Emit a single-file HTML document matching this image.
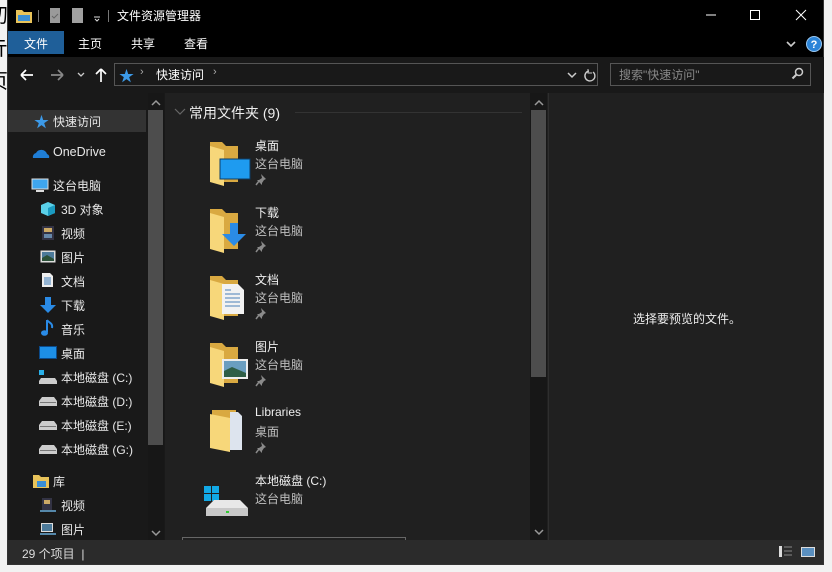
<!DOCTYPE html>
<html><head><meta charset="utf-8"><style>
*{margin:0;padding:0;box-sizing:border-box}
body{width:832px;height:572px;background:#f2f2f2;position:relative;overflow:hidden;font-family:"Liberation Sans","Noto Sans CJK SC",sans-serif;font-size:12px;color:#fff}
.a{position:absolute}
.win{left:7px;top:0;width:817px;height:565px;background:#000;border:1px solid #333;border-top:none}
.t{position:absolute;white-space:nowrap}
.nav .t{font-size:12px;color:#e8e8e8}
.it .n{font-size:12px;color:#eee}
.it .s{font-size:12px;color:#bdbdbd}
</style></head><body>
<div class="a" style="left:0;top:0;width:8px;height:110px;font-size:20px;color:#000;line-height:33px;overflow:hidden"><div style="margin-left:-12px">初<br>亓<br>页</div></div>
<div class="a win"></div>
<svg width="0" height="0" style="position:absolute"><defs><g id="pin"><path d="M6 1l5 5-2 1-2 3 0 2-5-5 2 0 3-2z" fill="#8a8a8a"/><path d="M4 8l-3 4" stroke="#8a8a8a" stroke-width="1.5"/></g></defs></svg>
<!-- title bar -->
<svg class="a" style="left:15px;top:7px" width="105" height="18">
<path d="M1 3h6l2 2h8v11H1z" fill="#e8c35a"/><rect x="3" y="8" width="12" height="6" fill="#3a8fd6"/>
<rect x="23" y="3" width="1" height="12" fill="#777"/>
<rect x="35" y="1" width="10" height="15" fill="#9a9a9a"/><path d="M37 9l2 2 4-4" stroke="#666" fill="none"/>
<rect x="57" y="1" width="11" height="15" fill="#a0a0a0"/>
<path d="M79 10h6M80 12l2 2 2-2" stroke="#ddd" fill="none"/>
<rect x="93" y="3" width="1" height="12" fill="#777"/>
</svg>
<div class="t" style="left:117px;top:7px;font-size:12px;color:#fff">文件资源管理器</div>
<svg class="a" style="left:700px;top:6px" width="120" height="20">
<path d="M6 9h10" stroke="#fff"/><rect x="50.5" y="4.5" width="9" height="9" stroke="#fff" fill="none"/>
<path d="M96 4l10 10M106 4l-10 10" stroke="#fff"/></svg>
<!-- ribbon -->
<div class="a" style="left:8px;top:31px;width:56px;height:23px;background:#1f5f99"></div>
<div class="t" style="left:24px;top:35px;font-size:12px">文件</div>
<div class="t" style="left:78px;top:35px;font-size:12px">主页</div>
<div class="t" style="left:131px;top:35px;font-size:12px">共享</div>
<div class="t" style="left:184px;top:35px;font-size:12px">查看</div>
<svg class="a" style="left:784px;top:36px" width="40" height="16"><path d="M3 6l4 4 4-4" stroke="#ccc" stroke-width="1.6" fill="none"/><circle cx="30" cy="8" r="7.5" fill="#2b84d8" stroke="#9cc8f0"/><text x="30" y="12" font-size="11" font-weight="bold" fill="#fff" text-anchor="middle" font-family="Liberation Sans">?</text></svg>
<!-- address row -->
<div class="a" style="left:8px;top:57px;width:816px;height:36px;background:#191919"></div>
<svg class="a" style="left:18px;top:66px" width="95" height="18">
<path d="M3 9h12M3 9l5-5M3 9l5 5" stroke="#fff" stroke-width="1.7" fill="none"/>
<path d="M33 9h12M45 9l-5-5M45 9l-5 5" stroke="#888" stroke-width="1.7" fill="none"/>
<path d="M60 7l3 3 3-3" stroke="#ccc" stroke-width="1.3" fill="none"/>
<path d="M83 16V3M83 3l-5 5M83 3l5 5" stroke="#fff" stroke-width="1.7" fill="none"/></svg>
<div class="a" style="left:114px;top:63px;width:484px;height:23px;border:1px solid #555"></div>
<div class="t" style="left:119px;top:65px;color:#3c9ae8;font-size:15px">★</div>
<div class="t" style="left:140px;top:66px;color:#aaa;font-size:11px">›</div>
<div class="t" style="left:156px;top:66px;font-size:12px">快速访问</div>
<div class="t" style="left:213px;top:66px;color:#aaa;font-size:11px">›</div>
<svg class="a" style="left:566px;top:67px" width="30" height="16"><path d="M2 6l4 4 4-4" stroke="#ccc" stroke-width="1.5" fill="none"/><path d="M27 5a5 5 0 1 1-4-1" stroke="#ccc" stroke-width="1.4" fill="none"/><path d="M22 2v4h4" stroke="#ccc" fill="none"/></svg>
<div class="a" style="left:610px;top:63px;width:201px;height:23px;border:1px solid #555"></div>
<div class="t" style="left:619px;top:66px;color:#888;font-size:12px">搜索"快速访问"</div>
<svg class="a" style="left:791px;top:67px" width="14" height="14"><circle cx="8" cy="5" r="3.5" stroke="#ccc" stroke-width="1.5" fill="none"/><path d="M5.5 7.5L1.5 11.5" stroke="#ccc" stroke-width="2"/></svg>
<!-- nav pane -->
<div class="a" style="left:8px;top:93px;width:157px;height:447px;background:#191919"></div>
<div class="a" style="left:148px;top:93px;width:16px;height:447px;background:#171717"></div>
<div class="a" style="left:148px;top:110px;width:15px;height:335px;background:#4d4d4d"></div>
<svg class="a" style="left:148px;top:96px" width="16" height="444"><path d="M4 9l4-4 4 4" stroke="#999" stroke-width="1.5" fill="none"/><path d="M4 435l4 4 4-4" stroke="#999" stroke-width="1.5" fill="none"/></svg>
<div class="a" style="left:8px;top:110px;width:138px;height:22px;background:#333"></div>
<div class="nav">
<div class="t" style="left:34px;top:111px;color:#3c9ae8;font-size:15px">★</div><div class="t" style="left:53px;top:113px">快速访问</div>
<svg class="a" style="left:32px;top:147px" width="18" height="12"><path d="M1 11a4 4 0 0 1 3-5 6 6 0 0 1 11 1 3 3 0 0 1 2 4z" fill="#1f7ed6"/></svg><div class="t" style="left:53px;top:145px;font-size:12.5px">OneDrive</div>
<svg class="a" style="left:31px;top:178px" width="18" height="15"><rect x="1" y="1" width="16" height="10" fill="#3fa6ee" stroke="#ddd"/><rect x="5" y="12" width="8" height="2" fill="#ddd"/></svg><div class="t" style="left:53px;top:177px">这台电脑</div>
<svg class="a" style="left:40px;top:201px" width="16" height="16"><path d="M8 1l7 3v8l-7 3-7-3V4z" fill="#5ad0e8"/><path d="M8 7l7-3v8l-7 3z" fill="#1a9ac0"/></svg><div class="t" style="left:61px;top:201px">3D 对象</div>
<svg class="a" style="left:41px;top:225px" width="14" height="16"><rect x="1" y="1" width="12" height="14" fill="#334"/><rect x="3" y="3" width="8" height="4" fill="#ca6"/><rect x="3" y="9" width="8" height="4" fill="#68a"/></svg><div class="t" style="left:61px;top:225px">视频</div>
<svg class="a" style="left:40px;top:250px" width="16" height="13"><rect x="0.5" y="0.5" width="15" height="12" fill="#ddd"/><rect x="2" y="2" width="12" height="9" fill="#4c7a9a"/><path d="M2 8l5-3 7 4v2H2z" fill="#2b5038"/></svg><div class="t" style="left:61px;top:249px">图片</div>
<svg class="a" style="left:41px;top:272px" width="13" height="16"><path d="M1 1h8l3 3v11H1z" fill="#eee"/><path d="M3 6h7M3 8h7M3 10h7M3 12h7" stroke="#3a7ab8"/></svg><div class="t" style="left:61px;top:273px">文档</div>
<svg class="a" style="left:39px;top:296px" width="18" height="18"><path d="M6 1h6v8h5l-8 8-8-8h5z" fill="#2a8be6"/></svg><div class="t" style="left:61px;top:297px">下载</div>
<svg class="a" style="left:40px;top:319px" width="14" height="18"><path d="M7 1v12" stroke="#2a8be6" stroke-width="2"/><ellipse cx="4.5" cy="14" rx="3.5" ry="2.8" fill="#2a8be6"/><path d="M7 1c2 3 6 3 5 8" stroke="#2a8be6" stroke-width="2" fill="none"/></svg><div class="t" style="left:61px;top:321px">音乐</div>
<svg class="a" style="left:39px;top:346px" width="18" height="13"><rect x="0.5" y="0.5" width="17" height="12" fill="#1d8fe6" stroke="#0b4a8a"/></svg><div class="t" style="left:61px;top:345px">桌面</div>
<svg class="a" style="left:39px;top:370px" width="18" height="14"><rect x="0" y="0" width="5" height="5" fill="#2ab0e8"/><path d="M2 8h14l2 3v3H0v-3z" fill="#ccc"/></svg><div class="t" style="left:61px;top:369px">本地磁盘 (C:)</div>
<svg class="a" style="left:39px;top:396px" width="18" height="10"><path d="M3 1h12l3 4v5H0V5z" fill="#ccc"/><rect x="1" y="6" width="16" height="1" fill="#777"/></svg><div class="t" style="left:61px;top:393px">本地磁盘 (D:)</div>
<svg class="a" style="left:39px;top:420px" width="18" height="10"><path d="M3 1h12l3 4v5H0V5z" fill="#ccc"/><rect x="1" y="6" width="16" height="1" fill="#777"/></svg><div class="t" style="left:61px;top:417px">本地磁盘 (E:)</div>
<svg class="a" style="left:39px;top:444px" width="18" height="10"><path d="M3 1h12l3 4v5H0V5z" fill="#ccc"/><rect x="1" y="6" width="16" height="1" fill="#777"/></svg><div class="t" style="left:61px;top:441px">本地磁盘 (G:)</div>
<svg class="a" style="left:32px;top:474px" width="18" height="15"><path d="M1 1h6l2 2h8v11H1z" fill="#e8c35a"/><rect x="5" y="7" width="9" height="6" fill="#3a8fd6"/></svg><div class="t" style="left:53px;top:473px">库</div>
<svg class="a" style="left:40px;top:497px" width="16" height="16"><rect x="2" y="1" width="10" height="13" fill="#334"/><rect x="4" y="3" width="6" height="4" fill="#ca6"/><rect x="0" y="13" width="16" height="2" fill="#58a"/></svg><div class="t" style="left:61px;top:497px">视频</div>
<svg class="a" style="left:40px;top:522px" width="16" height="14"><rect x="1" y="1" width="12" height="9" fill="#ddd"/><rect x="2" y="2" width="10" height="7" fill="#4c7a9a"/><rect x="0" y="11" width="16" height="2" fill="#58a"/></svg><div class="t" style="left:61px;top:521px">图片</div>
</div>
<!-- content -->
<div class="a" style="left:165px;top:93px;width:384px;height:447px;background:#202020"></div>
<div class="a" style="left:530px;top:93px;width:17px;height:447px;background:#171717"></div>
<div class="a" style="left:531px;top:110px;width:15px;height:267px;background:#4d4d4d"></div>
<svg class="a" style="left:530px;top:96px" width="17" height="444"><path d="M5 9l4-4 4 4" stroke="#999" stroke-width="1.5" fill="none"/><path d="M5 434l4 4 4-4" stroke="#999" stroke-width="1.5" fill="none"/></svg>
<div class="a" style="left:548px;top:93px;width:1px;height:447px;background:#2e2e2e"></div>
<svg class="a" style="left:173px;top:106px" width="14" height="10"><path d="M2 3l5 5 5-5" stroke="#666" stroke-width="1.2" fill="none"/></svg>
<div class="t" style="left:189px;top:103px;font-size:14px;color:#eee">常用文件夹 (9)</div>
<div class="a" style="left:295px;top:112px;width:227px;height:1px;background:#333"></div>

<div class="it">
<svg class="a" style="left:208px;top:140px" width="44" height="46"><path d="M2 2h12l4 4h12v36H2z" fill="#d9a941"/><path d="M2 6l14 4v36L2 42z" fill="#f7d77a"/><rect x="12" y="19" width="30" height="20" fill="#1e9bf0" stroke="#0d3d66"/></svg>
<div class="t n" style="left:255px;top:137px">桌面</div><div class="t s" style="left:255px;top:155px">这台电脑</div><svg class="a" style="left:255px;top:173px" width="13" height="13"><use href="#pin"/></svg>
<svg class="a" style="left:208px;top:207px" width="44" height="46"><path d="M2 2h12l4 4h12v36H2z" fill="#d9a941"/><path d="M2 6l14 4v36L2 42z" fill="#f7d77a"/><path d="M22 16h8v11h8L26 39 14 27h8z" fill="#2a8be6"/></svg>
<div class="t n" style="left:255px;top:204px">下载</div><div class="t s" style="left:255px;top:222px">这台电脑</div><svg class="a" style="left:255px;top:240px" width="13" height="13"><use href="#pin"/></svg>
<svg class="a" style="left:208px;top:274px" width="44" height="46"><path d="M2 2h12l4 4h12v36H2z" fill="#d9a941"/><path d="M2 6l14 4v36L2 42z" fill="#f7d77a"/><path d="M14 10h16l6 6v24H14z" fill="#f2f2f2"/><path d="M17 16h6M17 20h15M17 24h15M17 28h15M17 32h15" stroke="#4a80b8"/></svg>
<div class="t n" style="left:255px;top:271px">文档</div><div class="t s" style="left:255px;top:289px">这台电脑</div><svg class="a" style="left:255px;top:307px" width="13" height="13"><use href="#pin"/></svg>
<svg class="a" style="left:208px;top:341px" width="44" height="46"><path d="M2 2h12l4 4h12v36H2z" fill="#d9a941"/><path d="M2 6l14 4v36L2 42z" fill="#f7d77a"/><rect x="14" y="18" width="26" height="20" fill="#eee"/><rect x="16" y="20" width="22" height="16" fill="#6a9ec0"/><path d="M16 30l8-4 14 6v4H16z" fill="#2f5e46"/></svg>
<div class="t n" style="left:255px;top:338px">图片</div><div class="t s" style="left:255px;top:356px">这台电脑</div><svg class="a" style="left:255px;top:374px" width="13" height="13"><use href="#pin"/></svg>
<svg class="a" style="left:208px;top:408px" width="44" height="46"><path d="M4 2h24v38H4z" fill="#d9a941"/><path d="M22 4h8l4 4v34H22z" fill="#dde4ee"/><path d="M2 6l20 4v34L2 40z" fill="#f7d77a"/></svg>
<div class="t n" style="left:255px;top:405px">Libraries</div><div class="t s" style="left:255px;top:423px">桌面</div><svg class="a" style="left:255px;top:441px" width="13" height="13"><use href="#pin"/></svg>
<svg class="a" style="left:202px;top:484px" width="50" height="36"><rect x="2" y="2" width="7" height="7" fill="#12a9e6"/><rect x="10" y="2" width="7" height="7" fill="#12a9e6"/><rect x="2" y="10" width="7" height="7" fill="#12a9e6"/><rect x="10" y="10" width="7" height="7" fill="#12a9e6"/><path d="M12 16h26l8 8v8H4v-8z" fill="#e8e8e8"/><path d="M4 24h42v8H4z" fill="#c8c8c8"/><rect x="24" y="27" width="3" height="2" fill="#3c3"/></svg>
<div class="t n" style="left:255px;top:472px">本地磁盘 (C:)</div><div class="t s" style="left:255px;top:490px">这台电脑</div>
</div>
<div class="a" style="left:182px;top:537px;width:224px;height:3px;border:1px solid #666;border-bottom:none"></div>
<!-- preview -->
<div class="a" style="left:549px;top:93px;width:274px;height:447px;background:#202020"></div>
<div class="t" style="left:633px;top:310px;font-size:12px;color:#eee">选择要预览的文件。</div>
<!-- status -->
<div class="a" style="left:8px;top:540px;width:815px;height:24px;background:#2b2b2b"></div>
<div class="t" style="left:22px;top:545px;font-size:12px;color:#ddd">29 个项目 &nbsp;|</div>
<svg class="a" style="left:778px;top:545px" width="40" height="14"><rect x="1" y="1" width="3" height="11" fill="#ddd"/><path d="M6 2h8M6 6h8M6 10h8" stroke="#888"/><rect x="23" y="2" width="14" height="10" fill="#ddd"/><rect x="24" y="3" width="12" height="8" fill="#5a8fbf"/></svg>
</body></html>
